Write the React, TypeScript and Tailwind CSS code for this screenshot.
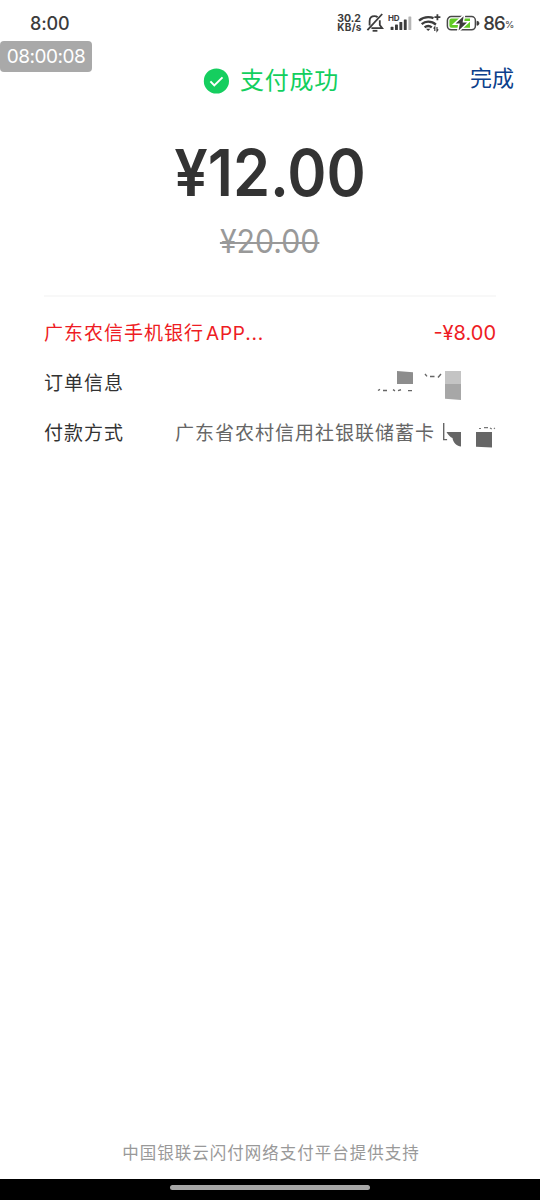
const cjk = "font-['Inter','Noto_Sans_CJK_SC',sans-serif]";

const BellOffIcon = () => (
  <svg width="18" height="20" viewBox="0 0 18 20" fill="none" stroke="#3c3c3c" strokeWidth="1.8">
    <path d="M3.6 12.4V8.2c0-3 2-5 5-5 1.2 0 2.2.3 3 1" />
    <path d="M13.8 7.2v4.8l2.4 3.2H5.4" />
    <path d="M16.2 1 1.4 17.2" />
    <path d="M6.6 17.8h4.8" />
  </svg>
);

const SignalIcon = () => (
  <svg width="24" height="20" viewBox="0 0 24 20" fill="#3c3c3c">
    <text x="0" y="8" fontSize="8" fontWeight="700" fontFamily="Inter" textLength="11.5">HD</text>
    <rect x="2.6" y="13.8" width="2.9" height="3.2" rx=".6" />
    <rect x="7" y="11.6" width="2.9" height="5.4" rx=".6" />
    <rect x="11.4" y="9" width="2.9" height="8" rx=".6" />
    <rect x="15.8" y="6.4" width="2.9" height="10.6" rx=".6" />
    <rect x="20.4" y="3.4" width="2.9" height="13.6" rx=".6" fill="#b5b5b5" />
  </svg>
);

const WifiIcon = () => (
  <svg width="24" height="20" viewBox="0 0 24 20" fill="none" stroke="#3c3c3c" strokeWidth="2.3">
    <path d="M1 7.6C3.7 5.3 6.8 4.1 10.2 4.1c1.9 0 3.7.3 5.3 1" />
    <path d="M3.7 11.1c1.9-1.7 4.1-2.5 6.5-2.5 3 0 5.6 1 7.7 3" />
    <path d="M6.6 14.3c1.1-.9 2.3-1.3 3.6-1.3s2.5.4 3.6 1.3" />
    <path d="m8 15.7 2.2 2.3 2.2-2.3z" fill="#3c3c3c" stroke="none" />
    <path d="M19.4 1.2v6M16.4 4.2h6" strokeWidth="1.8" />
    <path d="M16.8 18v-4l-1.2 1.6M19 14v4l1.2-1.6" strokeWidth="1.2" />
  </svg>
);

const BatteryIcon = () => (
  <svg width="34" height="20" viewBox="0 0 34 20">
    <rect x="1.4" y="3.6" width="28" height="13.2" rx="3.8" fill="white" stroke="#484848" strokeWidth="1.5" />
    <path d="M5.4 5.6H24v9.2H5.4a2 2 0 0 1-2-2V7.6a2 2 0 0 1 2-2z" fill="#60ca24" />
    <path
      d="M17.6 3.2 9.6 10.6h4.2L12.6 17.4l8.4-7.8h-4.4z"
      fill="#3c3c3c"
      stroke="white"
      strokeWidth="3"
      paintOrder="stroke"
    />
    <path d="M31 8.3a2 2 0 0 1 0 4z" fill="#3c3c3c" stroke="#3c3c3c" strokeWidth=".8" />
  </svg>
);

const StatusBar = () => (
  <div className="flex h-[46px] shrink-0 items-center pl-[30px] pr-[26px] text-[#3c3c3c]">
    <span className="text-[18px] font-medium tracking-[-0.1px]">8:00</span>
    <div className="ml-auto flex items-center">
      <div className="mr-[4px] flex w-[25px] flex-col text-[10.5px] font-bold">
        <span className="h-[9px] leading-[9px]">30.2</span>
        <span className="h-[9px] whitespace-nowrap text-[10px] leading-[9px] tracking-[0.3px]">KB/s</span>
      </div>
      <BellOffIcon />
      <div className="ml-[4px] flex">
        <SignalIcon />
      </div>
      <div className="ml-[6px] flex">
        <WifiIcon />
      </div>
      <div className="ml-[4px] flex">
        <BatteryIcon />
      </div>
      <span className="ml-[3px] text-[18.5px] font-medium leading-5 tracking-[-0.8px]">86</span>
      <span className="mt-[5px] text-[9.5px] tracking-[-0.3px]">%</span>
    </div>
  </div>
);

// What stays visible of the order text behind its privacy mask
const MaskedOrder = () => (
  <svg width="125" height="36" viewBox="371 366 125 36">
    <path d="M397 371l16 1.3V384h-16z" fill="#8d8d8d" />
    <path d="M445 371h16v13h-16z" fill="#c4c4c4" />
    <path d="M445 384h16v16l-16-1.3z" fill="#a7a7a7" />
    <path
      d="M378 390.5l2-1.2M383 390.5h4M393 389.6l2 1.2M398 390.6l3-.8M408 390.6h4M425 374l2 2.4M430 376.5h4.5M438 377.5l3-3.5"
      stroke="#666"
      strokeWidth="1.4"
      fill="none"
    />
  </svg>
);

const MaskedCard = () => (
  <svg width="55" height="36" viewBox="441 416 55 36">
    <path d="M443.7 423v16.6h3.4" fill="none" stroke="#666" strokeWidth="1.4" />
    <path d="M446.5 432H461v14.5c-3.8 0-8-4-8.5-8.5-2-.8-4.5-3-6-6z" fill="#666" />
    <path d="M476 432h16v15.5l-16-.8z" fill="#666" />
    <path d="M479 428.5h2M484 427.6h4M490 428l1.8 1M494 427.8l.8 1" stroke="#777" strokeWidth="1.2" />
  </svg>
);

export default function App() {
  return (
    <div className={`relative flex h-[1200px] w-[540px] flex-col bg-white ${cjk}`}>
      <StatusBar />
      <div className="absolute left-0 top-[41px] flex h-[31px] w-[92px] items-center justify-center rounded-[4px] bg-[#a9a9a9] pt-[2px] text-[19px] tracking-[-0.5px] text-white">
        08:00:08
      </div>

      <header className="grid h-[70px] grid-cols-[1fr_auto_1fr] items-center pl-[28px] pr-[26px]">
        <span />
        <div className="flex items-center gap-[11px] text-[#12cf5e]">
          <svg width="26" height="26" viewBox="0 0 26 26">
            <circle cx="13.4" cy="13" r="12.6" fill="#15ce5f" />
            <path d="m7.4 13.4 3.9 4 8.2-8" fill="none" stroke="white" strokeWidth="2" />
          </svg>
          <h1 className="text-[24px] leading-8 tracking-[0.8px]">支付成功</h1>
        </div>
        <span className="mt-[-6px] text-right text-[22px] leading-8 text-[#0c3f8c]">完成</span>
      </header>

      <section className="flex flex-col items-center pt-[17px]">
        <div className="scale-x-[0.93] text-[64px] font-semibold leading-[80px] text-[#333]">¥12.00</div>
        <div className="mt-[9px] scale-x-[0.945] text-[32px] leading-[40px] text-[#999] line-through decoration-[2px]">
          ¥20.00
        </div>
      </section>

      <section className="mx-[44px] mt-[33px] border-t-2 border-[#f8f8f8] pt-[12px] text-[19px]">
        <div className="flex h-[50px] items-center justify-between text-[#ee1c24]">
          <span className="tracking-[1px]">
            广东农信手机银行<span className="ml-[2px] tracking-[0.8px]">APP...</span>
          </span>
          <span className="mt-[-2px] text-[20px]">-¥8.00</span>
        </div>
        <div className="flex h-[50px] items-center justify-between text-[#333]">
          <span className="tracking-[1px]">订单信息</span>
          <MaskedOrder />
        </div>
        <div className="flex h-[50px] items-center text-[#333]">
          <span className="w-[131px] tracking-[1px]">付款方式</span>
          <span className="whitespace-nowrap tracking-[1px] text-[#666]">广东省农村信用社银联储蓄卡</span>
          <div className="ml-auto">
            <MaskedCard />
          </div>
        </div>
      </section>

      <footer className="mt-auto">
        <p className="mb-[14px] pl-[2px] text-center text-[16.5px] leading-6 tracking-[1px] text-[#999]">
          中国银联云闪付网络支付平台提供支持
        </p>
        <div className="flex h-[21px] justify-center bg-black pt-[6px]">
          <div className="h-[5px] w-[200px] rounded-full bg-[#a6a6a6]" />
        </div>
      </footer>
    </div>
  );
}
